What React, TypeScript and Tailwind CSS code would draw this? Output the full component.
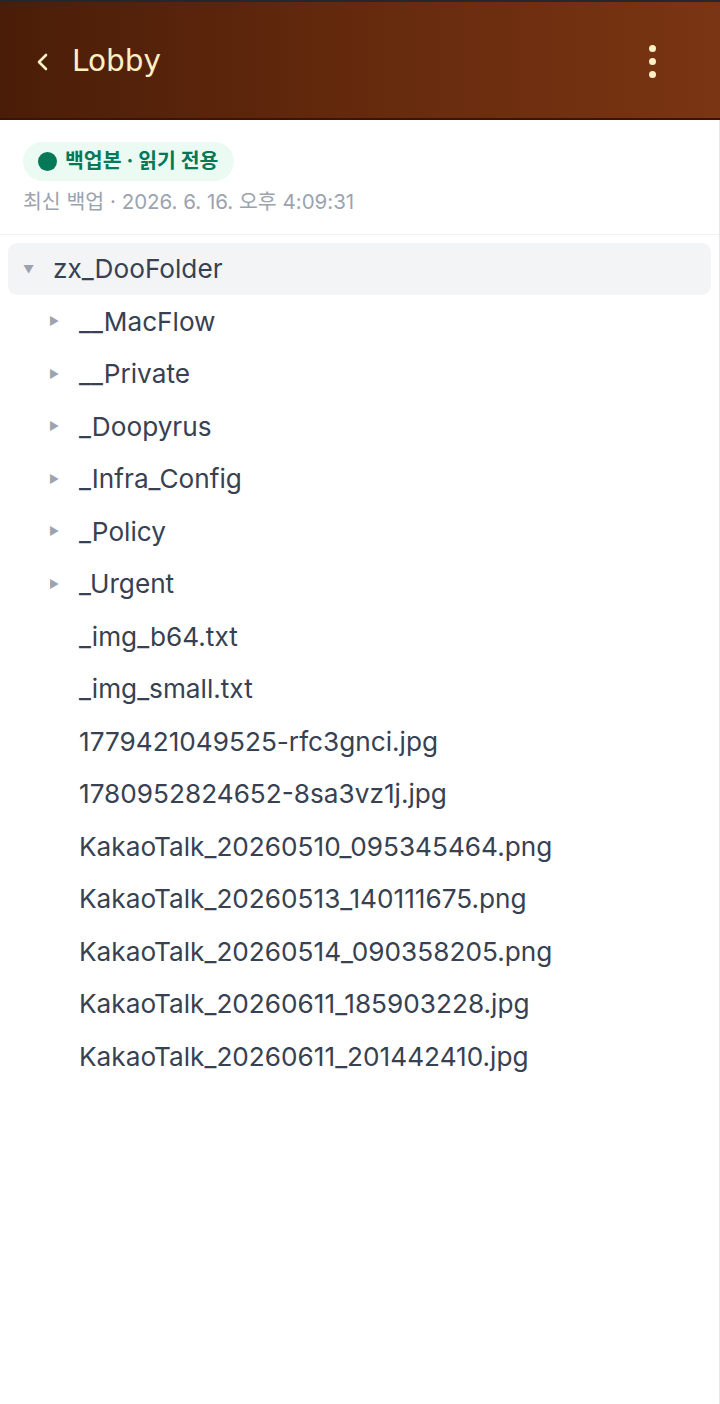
import React from "react";

const folders = ["__MacFlow", "__Private", "_Doopyrus", "_Infra_Config", "_Policy", "_Urgent"];
const files = [
  "_img_b64.txt",
  "_img_small.txt",
  "1779421049525-rfc3gnci.jpg",
  "1780952824652-8sa3vz1j.jpg",
  "KakaoTalk_20260510_095345464.png",
  "KakaoTalk_20260513_140111675.png",
  "KakaoTalk_20260514_090358205.png",
  "KakaoTalk_20260611_185903228.jpg",
  "KakaoTalk_20260611_201442410.jpg",
];

const inter = { fontFamily: 'Inter, "Noto Sans CJK KR", sans-serif' };

export default function App() {
  return (
    <div className="w-[720px] min-h-[1404px] bg-white" style={inter}>
      <div className="h-[2px] bg-[#222831]" />
      <header
        className="h-[118px] flex items-center justify-between bg-gradient-to-r from-[#4a1d08] via-[#652a0d] to-[#7a3513] border-b-[2px] border-[#3a1406] pl-[34px] pr-[64px] pt-[3px]"
        style={{ fontFamily: '"DejaVu Sans", sans-serif' }}
      >
        <div className="flex items-center gap-[20px]">
          <svg width="18" height="22" viewBox="0 0 18 22" fill="none">
            <path d="M12 4 L5 11 L12 18" stroke="#fdf0c4" strokeWidth="2.6" strokeLinecap="round" strokeLinejoin="round" />
          </svg>
          <span className="text-[29.5px] text-[#fdf0c4] leading-none">Lobby</span>
        </div>
        <div className="flex flex-col gap-[6px] items-center">
          <div className="w-[7px] h-[7px] rounded-full bg-[#fdf0c4]" />
          <div className="w-[7px] h-[7px] rounded-full bg-[#fdf0c4]" />
          <div className="w-[7px] h-[7px] rounded-full bg-[#fdf0c4]" />
        </div>
      </header>
      <div className="border-r border-[#e5e7eb] min-h-[1284px]">
        <div className="px-[23px] pt-[22px] pb-[17px] border-b border-[#f0f1f3]">
          <div className="inline-flex items-center h-[39px] rounded-full bg-[#ebfbf3] pl-[15px] pr-[16px] gap-[8px]">
            <span className="w-[19px] h-[19px] rounded-full bg-[#047857]" />
            <span className="text-[20.5px] font-bold text-[#047857]">백업본 · 읽기 전용</span>
          </div>
          <div className="mt-[6px] text-[20.5px] text-[#9ca3af] leading-[30px]">최신 백업 · 2026. 6. 16. 오후 4:09:31</div>
        </div>
        <div className="px-[8px] pt-[8px] text-[#374151] text-[26.2px]">
          <div className="h-[52px] rounded-[9px] bg-[#f3f4f6] flex items-center pl-[15px]">
            <span className="text-[11px] text-[#9ca3af] w-[30px]">▼</span>
            <span>zx_DooFolder</span>
          </div>
          {folders.map((f) => (
            <div key={f} className="h-[52.5px] flex items-center pl-[41px]">
              <span className="text-[11px] text-[#9ca3af] w-[30px]">▶</span>
              <span>{f}</span>
            </div>
          ))}
          {files.map((f) => (
            <div key={f} className="h-[52.5px] flex items-center pl-[71px]">
              <span>{f}</span>
            </div>
          ))}
        </div>
      </div>
    </div>
  );
}
